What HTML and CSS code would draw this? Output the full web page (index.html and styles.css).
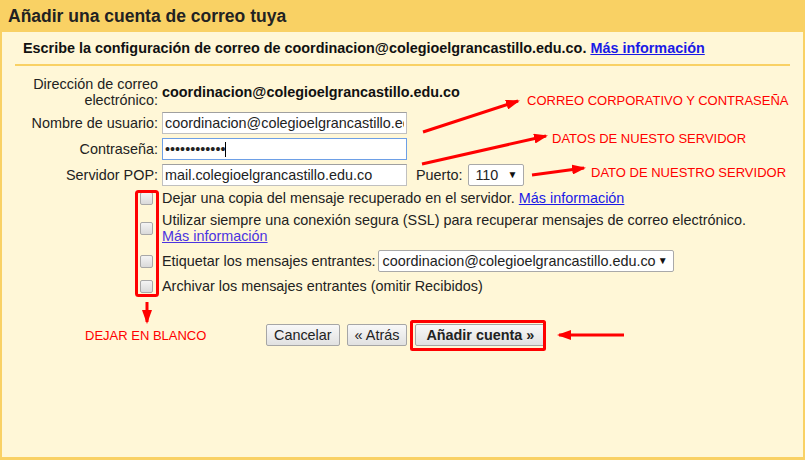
FILE: index.html
```html
<!DOCTYPE html>
<html lang="es">
<head>
  <meta charset="UTF-8" />
  <title>Añadir una cuenta de correo tuya</title>
  <link rel="stylesheet" href="styles.css">
</head>
<body>
  <div class="page">
    <div class="header">
      <h1>Añadir una cuenta de correo tuya</h1>
    </div>

    <div class="panel">
      <p class="intro">Escribe la configuración de correo de coordinacion@colegioelgrancastillo.edu.co. <a href="#">Más información</a></p>

      <div class="form">
        <div class="lbl">Dirección de correo<br>electrónico:</div>
        <div class="email">coordinacion@colegioelgrancastillo.edu.co</div>

        <div class="lbl">Nombre de usuario:</div>
        <div><input type="text" class="box" value="coordinacion@colegioelgrancastillo.edu.co"></div>

        <div class="lbl">Contraseña:</div>
        <div class="inline pass"><input type="password" class="box focus" value="xxxxxxxxxxxx"><span class="cursor"></span></div>

        <div class="lbl">Servidor POP:</div>
        <div class="inline">
          <input type="text" class="box" value="mail.colegioelgrancastillo.edu.co">
          <span class="port-lbl">Puerto:</span>
          <span class="select port"><span>110</span><span class="caret">▼</span></span>
        </div>
      </div>

      <div class="options">
        <input type="checkbox" class="check">
        <div>Dejar una copia del mensaje recuperado en el servidor. <a href="#">Más información</a></div>

        <input type="checkbox" class="check">
        <div>Utilizar siempre una conexión segura (SSL) para recuperar mensajes de correo electrónico.<br><a href="#" class="visited">Más información</a></div>

        <input type="checkbox" class="check">
        <div class="inline">Etiquetar los mensajes entrantes:
          <span class="select label-sel"><span>coordinacion@colegioelgrancastillo.edu.co</span><span class="caret">▼</span></span>
        </div>

        <input type="checkbox" class="check">
        <div>Archivar los mensajes entrantes (omitir Recibidos)</div>
      </div>

      <div class="buttons">
        <button class="btn">Cancelar</button>
        <button class="btn">« Atrás</button>
        <button class="btn primary">Añadir cuenta »</button>
      </div>
    </div>

    <!-- annotations drawn over the screenshot -->
    <svg class="notes" width="805" height="460" viewBox="0 0 805 460">
      <defs>
        <marker id="head" markerUnits="userSpaceOnUse" markerWidth="14" markerHeight="10" refX="12" refY="5" orient="auto">
          <path d="M0,0 L14,5 L0,10 z" fill="#f00"/>
        </marker>
      </defs>
      <rect x="136.5" y="191.5" width="21" height="104" rx="2" fill="none" stroke="#f00" stroke-width="3"/>
      <rect x="411.5" y="321.5" width="133" height="28" rx="1" fill="none" stroke="#f00" stroke-width="3"/>

      <line x1="423" y1="132" x2="518" y2="101" stroke="#f00" stroke-width="3" marker-end="url(#head)"/>
      <line x1="422" y1="164" x2="546" y2="136" stroke="#f00" stroke-width="3" marker-end="url(#head)"/>
      <line x1="532" y1="175" x2="584" y2="168" stroke="#f00" stroke-width="3" marker-end="url(#head)"/>
      <line x1="147" y1="302" x2="147" y2="322" stroke="#f00" stroke-width="3" marker-end="url(#head)"/>
      <line x1="624" y1="335" x2="559" y2="335" stroke="#f00" stroke-width="3" marker-end="url(#head)"/>
    </svg>

    <span class="note n1">CORREO CORPORATIVO Y CONTRASEÑA</span>
    <span class="note n2">DATOS DE NUESTO SERVIDOR</span>
    <span class="note n3">DATO DE NUESTRO SERVIDOR</span>
    <span class="note n4">DEJAR EN BLANCO</span>
  </div>
</body>
</html>
```

FILE: styles.css
```css
body {
  margin: 0;
  background: #f9d164;
  font-family: "Liberation Sans", Arial, sans-serif;
  font-size: 14.4px;
  color: #222;
}

.page {
  position: relative;
  width: 805px;
  height: 460px;
  overflow: hidden;
}

.header {
  height: 32px;
  padding-left: 8px;
}

.header h1 {
  margin: 0;
  font-size: 17.5px;
  line-height: 33px;
  color: #222;
}

.panel {
  margin: 0 2px;
  height: 425px;
  background: #fff7d7;
}

.intro {
  margin: 0 13px;
  padding: 8px 0 0 8px;
  height: 24px;
  line-height: 16px;
  border-bottom: 2px solid #f9d164;
  font-weight: bold;
  color: #111;
}

a {
  color: #1a1ae6;
}

a.visited {
  color: #4b34e0;
}

.form {
  display: grid;
  grid-template-columns: 156px 1fr;
  column-gap: 4px;
  row-gap: 4px;
  align-items: center;
  padding-top: 10px;
  line-height: 16px;
}

.lbl {
  text-align: right;
}

.email {
  font-weight: bold;
  color: #111;
}

.inline {
  display: flex;
  align-items: center;
}

.box {
  width: 245px;
  height: 22px;
  box-sizing: border-box;
  margin: 0;
  padding: 0 2px;
  border: 1px solid #c0c0c0;
  border-top-color: #a0a0a0;
  background: #fff;
  font: 14.4px "Liberation Sans", Arial, sans-serif;
  color: #222;
}

.box.focus {
  border-color: #6d9fe6;
}

/* text caret after the password dots */
.pass {
  position: relative;
}

.cursor {
  position: absolute;
  left: 63px;
  top: 4px;
  width: 1px;
  height: 15px;
  background: #000;
}

.port-lbl {
  margin-left: 9px;
}

.select {
  display: inline-flex;
  align-items: center;
  justify-content: space-between;
  height: 22px;
  box-sizing: border-box;
  padding: 0 6px;
  border: 1px solid #a9a9a9;
  border-radius: 2px;
  background: #fff;
  color: #222;
}

.port {
  width: 56px;
  margin-left: 6px;
}

.label-sel {
  width: 296px;
  margin-left: 2px;
  padding: 0 5px 0 4px;
}

.caret {
  font-size: 10px;
  color: #111;
}

.options {
  display: grid;
  grid-template-columns: 156px 1fr;
  column-gap: 4px;
  row-gap: 6px;
  align-items: center;
  padding-top: 4px;
  line-height: 16px;
}

.check {
  appearance: none;
  justify-self: end;
  width: 13px;
  height: 13px;
  margin: 0 5px 0 0;
  border: 1px solid #a8a8a8;
  border-radius: 2px;
  background: linear-gradient(#f4f4f4, #dadada);
}

.buttons {
  display: flex;
  gap: 7px;
  margin-top: 30px;
  padding-left: 264px;
}

.btn {
  height: 22px;
  padding: 0 7px;
  border: 1px solid #a6a6a6;
  border-radius: 2px;
  background: linear-gradient(#f8f8f8, #e1e1e1);
  font: 14.4px "Liberation Sans", Arial, sans-serif;
  line-height: 20px;
  color: #222;
}

.btn.primary {
  margin-left: 1px;
  padding: 0 10px;
  font-weight: bold;
}

.notes {
  position: absolute;
  left: 0;
  top: 0;
  pointer-events: none;
}

.note {
  position: absolute;
  font-size: 13px;
  line-height: 16px;
  color: #f00;
  white-space: nowrap;
}

.n1 { left: 527px; top: 93px; }
.n2 { left: 552px; top: 131px; }
.n3 { left: 591px; top: 165px; }
.n4 { left: 85px; top: 328px; }
```
